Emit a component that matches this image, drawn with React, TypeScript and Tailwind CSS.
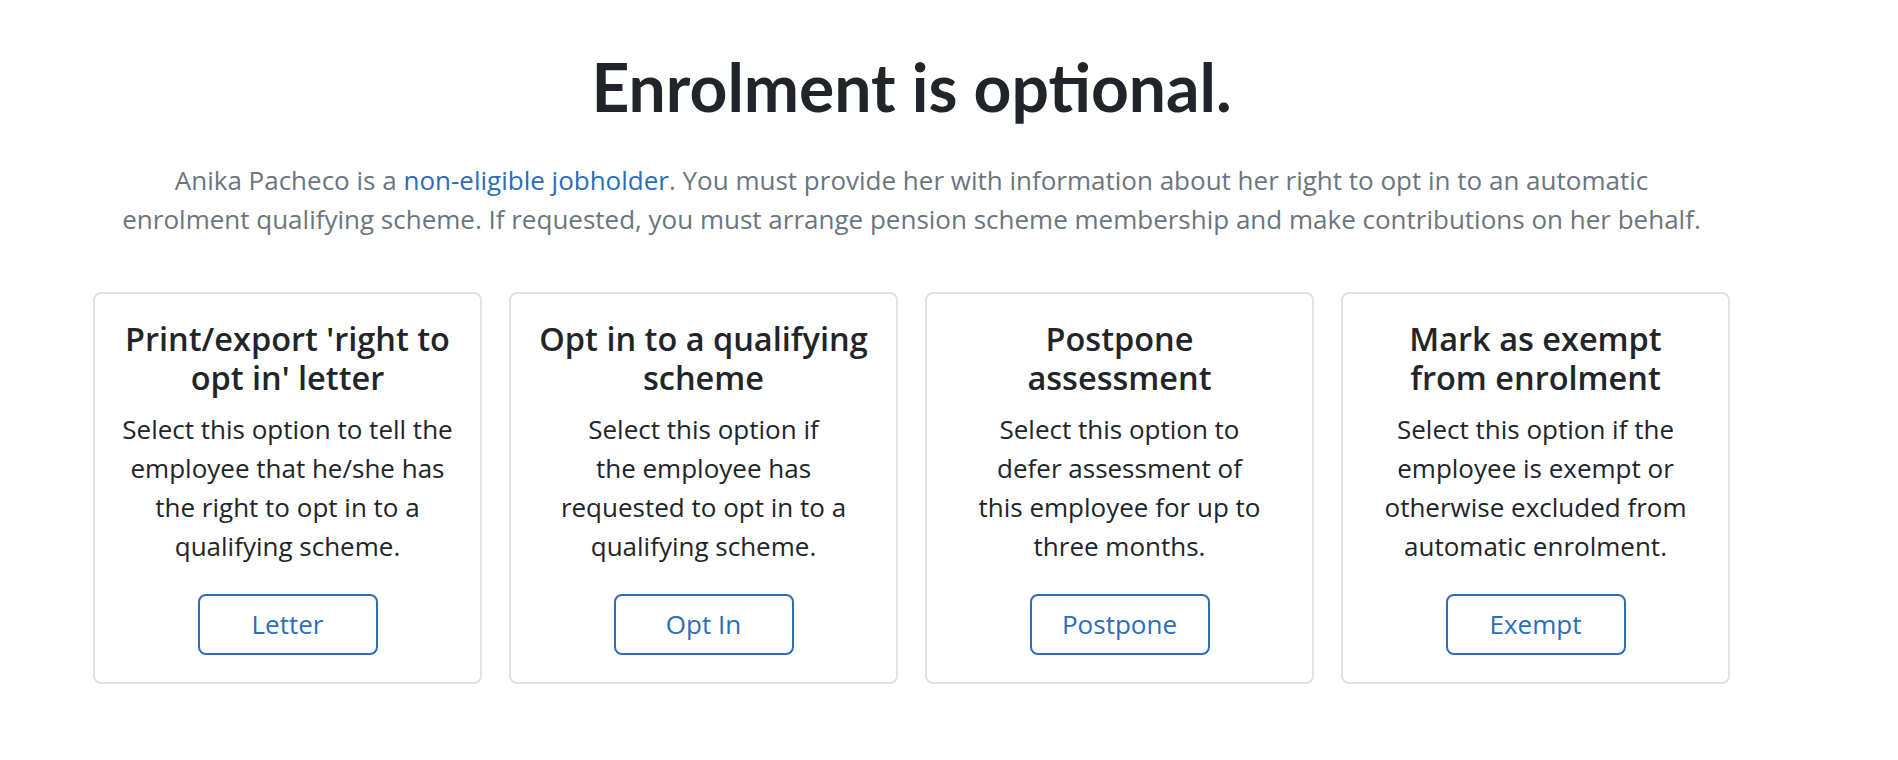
const options = [
    {
        title: ["Print/export 'right to", "opt in' letter"],
        lines: ['Select this option to tell the', 'employee that he/she has', 'the right to opt in to a', 'qualifying scheme.'],
        action: 'Letter',
    },
    {
        title: ['Opt in to a qualifying', 'scheme'],
        lines: ['Select this option if', 'the employee has', 'requested to opt in to a', 'qualifying scheme.'],
        action: 'Opt In',
    },
    {
        title: ['Postpone', 'assessment'],
        lines: ['Select this option to', 'defer assessment of', 'this employee for up to', 'three months.'],
        action: 'Postpone',
    },
    {
        title: ['Mark as exempt', 'from enrolment'],
        lines: ['Select this option if the', 'employee is exempt or', 'otherwise excluded from', 'automatic enrolment.'],
        action: 'Exempt',
    },
]

function Lines({ items }: { items: string[] }) {
    return (
        <>
            {items.map((line, i) => (
                <span key={i} className="block whitespace-nowrap">
                    {line}
                </span>
            ))}
        </>
    )
}

function OptionCard({ title, lines, action }: { title: string[]; lines: string[]; action: string }) {
    return (
        <div className="flex flex-col items-center rounded-[8px] border-2 border-[#dfe2e6] bg-white px-[20px] pt-[26px] pb-[27px] text-center">
            <h3 className="text-[32.5px] leading-[1.18] font-semibold text-[#212529]">
                <Lines items={title} />
            </h3>
            <p className="mt-[13px] text-[26px] leading-[1.5] text-[#212529]">
                <Lines items={lines} />
            </p>
            <button
                type="button"
                className="mt-[28px] flex h-[61px] w-[180px] items-center justify-center rounded-[8px] border-2 border-[#2c6db8] bg-white text-[26px] text-[#2c6db8]"
            >
                {action}
            </button>
        </div>
    )
}

export default function App() {
    return (
        <div className="min-h-[760px] bg-white font-['Open_Sans',sans-serif]">
            <div className="ml-[93px] w-[1637px] pt-[47px]">
                <h1 className="text-center font-['Lato',sans-serif] text-[66px] leading-[1.2] font-bold text-[#212529]">
                    Enrolment is optional.
                </h1>
                <p className="mx-auto mt-[35px] max-w-[1590px] text-center text-[26px] leading-[1.5] text-[#6c757d]">
                    Anika Pacheco is a{' '}
                    <a href="#" className="text-[#2c6db8]">
                        non-eligible jobholder
                    </a>
                    . You must provide her with information about her right to opt in to an automatic enrolment
                    qualifying scheme. If requested, you must arrange pension scheme membership and make
                    contributions on her behalf.
                </p>
                <div className="mt-[53px] grid grid-cols-4 gap-[27px]">
                    {options.map((o) => (
                        <OptionCard key={o.action} {...o} />
                    ))}
                </div>
            </div>
        </div>
    )
}
